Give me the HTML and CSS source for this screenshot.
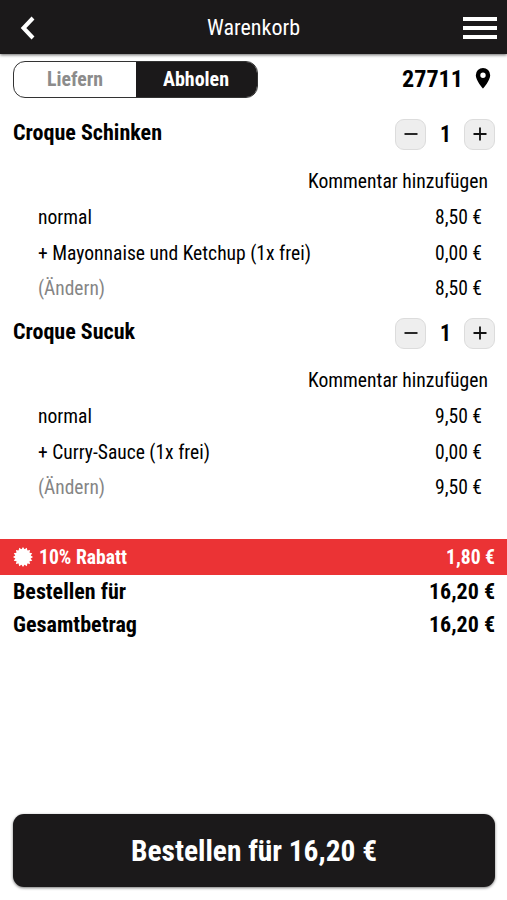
FILE: index.html
```html
<!DOCTYPE html>
<html lang="de">
<head>
<meta charset="utf-8">
<title>Warenkorb</title>
<link rel="stylesheet" href="styles.css">
</head>
<body>
<header class="topbar">
  <svg class="back" viewBox="0 0 16 24"><path d="M13 2 3.500 12 13 22" fill="none" stroke="#fff" stroke-width="4"/></svg>
  <h1><span class="t" data-w="93">Warenkorb</span></h1>
  <svg class="menu" viewBox="0 0 34 24"><path d="M0 3h34M0 12h34M0 21h34" stroke="#fff" stroke-width="4"/></svg>
</header>
<section class="mode">
  <div class="toggle"><div class="off"><span class="t" data-w="56">Liefern</span></div><div class="on"><span class="t" data-w="66">Abholen</span></div></div>
  <div class="place"><span class="t" data-w="61">27711</span><svg viewBox="0 0 16 22"><path fill="#000" fill-rule="evenodd" d="M8 1a7.200 7.200 0 0 0-7.200 7.200C.8 13.500 8 21.500 8 21.500S15.200 13.500 15.200 8.200A7.200 7.200 0 0 0 8 1Zm0 4.600a2.700 2.700 0 1 1 0 5.400 2.700 2.700 0 0 1 0-5.400Z"/></svg></div>
</section>
<main>
  <section class="item">
    <div class="head"><h2><span class="t" data-w="149">Croque Schinken</span></h2><div class="qty"><button><svg viewBox="0 0 16 16"><path d="M1.500 8h13"/></svg></button><b><span class="t" data-w="11">1</span></b><button><svg viewBox="0 0 16 16"><path d="M1.500 8h13M8 1.500v13"/></svg></button></div></div>
    <div class="comment"><span class="t" data-w="180">Kommentar hinzufügen</span></div>
    <div class="row"><span class="t" data-w="54">normal</span><span class="t" data-w="47">8,50 €</span></div>
    <div class="row"><span class="t" data-w="273">+ Mayonnaise und Ketchup (1x frei)</span><span class="t" data-w="47">0,00 €</span></div>
    <div class="row"><span class="t grey" data-w="67">(Ändern)</span><span class="t" data-w="47">8,50 €</span></div>
  </section>
  <section class="item">
    <div class="head"><h2><span class="t" data-w="122">Croque Sucuk</span></h2><div class="qty"><button><svg viewBox="0 0 16 16"><path d="M1.500 8h13"/></svg></button><b><span class="t" data-w="11">1</span></b><button><svg viewBox="0 0 16 16"><path d="M1.500 8h13M8 1.500v13"/></svg></button></div></div>
    <div class="comment"><span class="t" data-w="180">Kommentar hinzufügen</span></div>
    <div class="row"><span class="t" data-w="54">normal</span><span class="t" data-w="47">9,50 €</span></div>
    <div class="row"><span class="t" data-w="172">+ Curry-Sauce (1x frei)</span><span class="t" data-w="47">0,00 €</span></div>
    <div class="row"><span class="t grey" data-w="67">(Ändern)</span><span class="t" data-w="47">9,50 €</span></div>
  </section>
</main>
<section class="discount">
  <svg viewBox="-10 -10 20 20"><path fill="#fff" d="M10 0-3.830 9.240-7.070-7.070 9.240-3.830 0 10-9.240-3.830 7.070-7.070 3.830 9.240-10 0 3.830-9.240 7.070 7.070-9.240 3.830 0-10 9.240 3.830-7.070 7.070-3.830-9.240Z"/></svg>
  <span class="t" data-w="88">10% Rabatt</span><span class="t end" data-w="49">1,80 €</span>
</section>
<section class="totals">
  <div><span class="t" data-w="113">Bestellen für</span><span class="t" data-w="66">16,20 €</span></div>
  <div><span class="t" data-w="124">Gesamtbetrag</span><span class="t" data-w="66">16,20 €</span></div>
</section>
<footer><button class="order"><span class="t" data-w="246">Bestellen für 16,20 €</span></button></footer>
<script src="fit.js"></script>
</body>
</html>
```
FILE: styles.css
```css
* { box-sizing: border-box; }
body { margin: 0; height: 900px; display: flex; flex-direction: column; background: #fff; color: #000; font: 20px/24px "Roboto Condensed", Roboto, sans-serif; font-stretch: condensed; overflow: hidden; }
h1, h2 { margin: 0; font-size: inherit; }
button { padding: 0; font: inherit; }
.t { display: inline-block; white-space: nowrap; flex: none; }
.topbar { height: 54px; flex: none; background: #1b191a; color: #fff; display: grid; grid-template-columns: 54px 1fr 54px; align-items: center; box-shadow: 0 1px 3px #0009; }
.topbar h1 { font-size: 22px; font-weight: 400; line-height: 26px; padding-top: 1px; text-align: center; }
.back { width: 16px; height: 24px; margin: 2px 0 0 20px; }
.menu { width: 34px; height: 24px; margin: 2px 0 0 10px; }
.mode { height: 50px; flex: none; padding: 0 12px 0 13px; display: flex; justify-content: space-between; align-items: center; }
.toggle { width: 245px; height: 37px; border: 1px solid #333; border-radius: 12px; display: flex; overflow: hidden; font-weight: 700; }
.toggle div { flex: 1; display: flex; align-items: center; justify-content: center; }
.toggle .off { color: #8c8c8c; }
.toggle .on { color: #fff; background: #1b191a; }
.place { display: flex; align-items: center; gap: 12px; font-size: 24px; font-weight: 700; }
.place svg { width: 16px; height: 22px; margin: 0 4px 2px 0; }
.item { height: 199px; padding: 12px 12px 0 13px; }
.head { height: 36px; display: flex; justify-content: space-between; align-items: flex-start; }
.head h2 { font-size: 22px; line-height: 34px; }
.qty { display: flex; align-items: center; height: 36px; }
.qty button { width: 31px; height: 31px; border: 1px solid #dcdcdc; border-radius: 9px; background: #eee; color: #000; display: grid; place-items: center; }
.qty svg { width: 16px; height: 16px; stroke: #111; stroke-width: 1.8; }
.qty b { width: 38px; text-align: center; font-size: 24px; }
.comment { height: 47px; line-height: 59px; padding-right: 7px; display: flex; justify-content: flex-end; }
.row { height: 35.500px; line-height: 37.500px; padding: 0 13px 0 24.500px; display: flex; justify-content: space-between; }
.grey { color: #858585; }
.discount { height: 36px; margin-top: 37px; flex: none; padding: 0 12px 0 13px; background: #eb3335; color: #fff; font-weight: 700; display: flex; align-items: center; }
.discount svg { width: 20px; height: 20px; margin-right: 6px; }
.end { margin-left: auto; }
.totals { padding: 0 12px 0 13px; font-size: 22px; font-weight: 700; }
.totals div { height: 33px; line-height: 34px; display: flex; justify-content: space-between; }
footer { margin-top: auto; padding: 0 12px 13px 13px; }
.order { display: flex; align-items: center; justify-content: center; width: 100%; height: 73px; border: 0; border-radius: 11px; background: #1b191a; color: #fff; font-size: 30px; font-weight: 700; box-shadow: 0 1px 3px #0008; }
```
FILE: fit.js
```js
document.querySelectorAll('.t').forEach(function (el) {
  var w = el.getBoundingClientRect().width, target = +el.dataset.w;
  el.style.width = target + 'px';
  el.style.transformOrigin = '0 50%';
  el.style.transform = 'scaleX(' + target / w + ')';
});
```
